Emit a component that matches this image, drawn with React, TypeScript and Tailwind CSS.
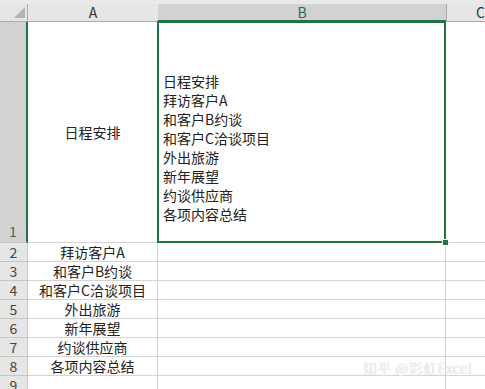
const font = "font-['Microsoft_YaHei','Noto_Sans_CJK_SC',sans-serif]";

const rows = [
  "拜访客户A",
  "和客户B约谈",
  "和客户C洽谈项目",
  "外出旅游",
  "新年展望",
  "约谈供应商",
  "各项内容总结",
];

const bLines = ["日程安排", ...rows];

function RowHeader({ n }: { n: number }) {
  return (
    <div className="flex w-[28px] shrink-0 items-center justify-center border-r border-b border-[#c6c6c6] bg-[#e6e6e6] text-[#444]">
      {n}
    </div>
  );
}

export default function App() {
  return (
    <div className={`relative h-[389px] w-[485px] overflow-hidden bg-white text-[14px] leading-[19px] text-[#222] ${font}`}>
      <div className="h-[4px] bg-[#e9e9e9]" />

      {/* column headers */}
      <div className="flex h-[18px]">
        <div className="flex w-[28px] shrink-0 items-end justify-end border-r border-b border-[#ababab] bg-[#e6e6e6] pr-[1px] pb-[2px]">
          <svg width="12" height="12" viewBox="0 0 12 12">
            <polygon points="11,0 11,11 0,11" fill="#b4b4b4" />
          </svg>
        </div>
        <div className="flex w-[130px] shrink-0 items-center justify-center border-b border-[#ababab] bg-[#e6e6e6] text-[#333]">
          A
        </div>
        <div className="flex w-[288px] shrink-0 items-center justify-center border-b-2 border-[#217346] bg-[#d2d2d2] text-[#2e6b4b]">
          B
        </div>
        <div className="flex w-[68px] shrink-0 items-center justify-center border-l border-b border-[#ababab] bg-[#e6e6e6] text-[#333]">
          C
        </div>
      </div>

      {/* row 1 */}
      <div className="flex h-[221px]">
        <div className="flex w-[28px] shrink-0 items-end justify-center border-r-2 border-b border-r-[#217346] border-b-[#c6c6c6] bg-[#d2d2d2] pb-[1px] text-[#3d6b52]">
          1
        </div>
        <div className="flex w-[130px] shrink-0 items-center justify-center border-r border-b border-[#d4d4d4]">
          日程安排
        </div>
        <div className="flex w-[288px] shrink-0 flex-col justify-end border-r border-b border-[#d4d4d4] pb-[18px] pl-[5px]">
          {bLines.map((line) => (
            <div key={line}>{line}</div>
          ))}
        </div>
        <div className="w-[68px] shrink-0 border-b border-[#d4d4d4]" />
      </div>

      {/* rows 2-9 */}
      {[...rows, ""].map((text, i) => (
        <div className="flex h-[19px]" key={i}>
          <RowHeader n={i + 2} />
          <div className="flex w-[130px] shrink-0 items-center justify-center border-r border-b border-[#d4d4d4]">
            {text}
          </div>
          <div className="w-[288px] shrink-0 border-r border-b border-[#d4d4d4]" />
          <div className="w-[68px] shrink-0 border-b border-[#d4d4d4]" />
        </div>
      ))}

      {/* selection on B1 */}
      <div className="absolute top-[21px] left-[157px] h-[222px] w-[289px] border-2 border-[#217346]" />
      <div className="absolute top-[239px] left-[442px] h-[7px] w-[7px] border border-white bg-[#217346]" />

      {/* watermark */}
      <div className="absolute top-[359px] left-[363px] font-['Noto_Sans_CJK_SC',sans-serif] text-[14px] font-light tracking-[0.5px] text-[#fbfbfb] [text-shadow:0_0_1px_#a8a8a8]">
        知乎 @彩虹Excel
      </div>
    </div>
  );
}
